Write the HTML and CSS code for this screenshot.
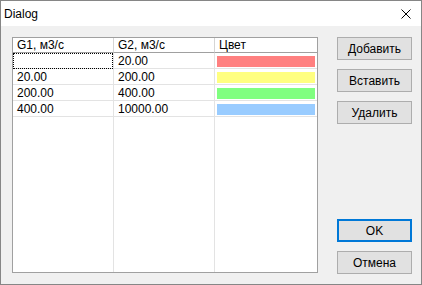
FILE: index.html
```html
<!DOCTYPE html>
<html lang="ru">
<head>
    <meta charset="UTF-8">
    <title>Dialog</title>
    <link rel="stylesheet" href="styles.css">
</head>
<body>

    <div class="window">
        <div class="titlebar">
            <span class="title">Dialog</span>
            <svg class="close" width="10" height="10" viewBox="0 0 10 10">
                <line x1="0.5" y1="0.5" x2="9.5" y2="9.5" />
                <line x1="9.5" y1="0.5" x2="0.5" y2="9.5" />
            </svg>
        </div>

        <div class="content">
            <!-- Таблица диапазонов -->
            <div class="table">
                <div class="col col-g1">
                    <div class="head">G1, м3/с</div>
                    <div class="cell focus"></div>
                    <div class="cell">20.00</div>
                    <div class="cell">200.00</div>
                    <div class="cell">400.00</div>
                </div>
                <div class="col col-g2">
                    <div class="head">G2, м3/с</div>
                    <div class="cell">20.00</div>
                    <div class="cell">200.00</div>
                    <div class="cell">400.00</div>
                    <div class="cell">10000.00</div>
                </div>
                <div class="col col-color">
                    <div class="head">Цвет</div>
                    <div class="cell"><div class="swatch red"></div></div>
                    <div class="cell"><div class="swatch yellow"></div></div>
                    <div class="cell"><div class="swatch green"></div></div>
                    <div class="cell"><div class="swatch blue"></div></div>
                </div>
            </div>

            <div class="buttons">
                <div class="group">
                    <button class="btn">Добавить</button>
                    <button class="btn">Вставить</button>
                    <button class="btn">Удалить</button>
                </div>
                <div class="group">
                    <button class="btn default">OK</button>
                    <button class="btn">Отмена</button>
                </div>
            </div>
        </div>
    </div>

</body>
</html>
```

FILE: styles.css
```css
body {
    margin: 0;
    font-family: "Liberation Sans", Arial, sans-serif;
    font-size: 12px;
    color: #000;
}
.window {
    width: 422px;
    height: 285px;
    box-sizing: border-box;
    border: 1px solid #868686;
    background-color: #f0f0f0;
    display: flex;
    flex-direction: column;
}
.titlebar {
    height: 25px;
    background-color: #fff;
    display: flex;
    align-items: center;
    justify-content: space-between;
    padding-left: 3px;
}
.title {
    font-size: 12px;
    margin-top: 1px;
}
.close {
    margin-right: 10px;
    margin-top: 1px;
}
.close line {
    stroke: #000;
    stroke-width: 1;
}
.content {
    flex: 1;
    display: flex;
    padding: 11px 9px 11px 11px;
}
.table {
    width: 306px;
    box-sizing: border-box;
    border: 1px solid #a0a0a0;
    background-color: #fff;
    display: flex;
}
.col {
    display: flex;
    flex-direction: column;
    border-right: 1px solid #e3e3e3;
}
.col-g1,
.col-g2 {
    width: 100px;
}
.col-color {
    width: 102px;
    border-right: none;
}
.head {
    height: 14px;
    line-height: 14px;
    padding-left: 4px;
    border-bottom: 1px solid #a0a0a0;
    border-right: 1px solid #d5d5d5;
    margin-right: -1px;
}
.col-color .head {
    border-right: none;
    margin-right: 0;
}
.cell {
    height: 15px;
    line-height: 16px;
    padding-left: 4px;
    border-bottom: 1px solid #e3e3e3;
}
.focus {
    outline: 1px dotted #000;
    outline-offset: -1px;
}
.col-color .cell {
    padding: 3px 2px 1px 2px;
    height: 11px;
}
.swatch {
    height: 11px;
}
.red { background-color: #ff8080; }
.yellow { background-color: #ffff80; }
.green { background-color: #80ff80; }
.blue { background-color: #99ccff; }
.buttons {
    margin-left: 19px;
    display: flex;
    flex-direction: column;
    justify-content: space-between;
    margin-bottom: -1px;
}
.group {
    display: flex;
    flex-direction: column;
    gap: 9px;
}
.btn {
    width: 75px;
    height: 23px;
    box-sizing: border-box;
    border: 1px solid #adadad;
    background-color: #e1e1e1;
    font-family: "Liberation Sans", Arial, sans-serif;
    font-size: 12px;
    color: #000;
    padding: 0;
}
.btn.default {
    border: 2px solid #0078d7;
}
```
